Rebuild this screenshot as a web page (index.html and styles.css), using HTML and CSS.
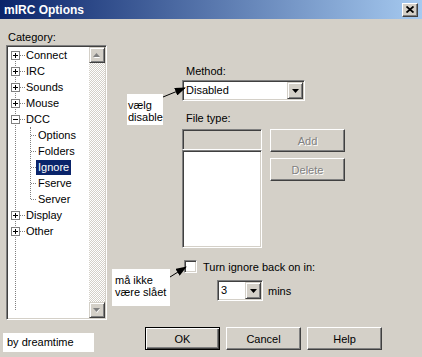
FILE: index.html
```html
<!DOCTYPE html>
<html lang="da">
<head>
    <meta charset="UTF-8">
    <title>mIRC Options</title>
    <link rel="stylesheet" href="styles.css">
</head>
<body>
    <div class="titlebar">
        <span class="title">mIRC Options</span>
        <span class="close">
            <svg width="8" height="7" viewBox="0 0 8 7">
                <path d="M0.5 0.5 L7.5 6.5 M7.5 0.5 L0.5 6.5" stroke="#000" stroke-width="1.8" fill="none"/>
            </svg>
        </span>
    </div>

    <div class="client">
        <div class="left">
            <div class="cat-label">Category:</div>
            <div class="tree">
                <ul class="roots">
                    <li><div class="row"><span class="exp plus"></span><span class="txt">Connect</span></div></li>
                    <li><div class="row"><span class="exp plus"></span><span class="txt">IRC</span></div></li>
                    <li><div class="row"><span class="exp plus"></span><span class="txt">Sounds</span></div></li>
                    <li><div class="row"><span class="exp plus"></span><span class="txt">Mouse</span></div></li>
                    <li>
                        <div class="row"><span class="exp minus"></span><span class="txt">DCC</span></div>
                        <ul class="kids">
                            <li class="row kid"><span class="txt">Options</span></li>
                            <li class="row kid"><span class="txt">Folders</span></li>
                            <li class="row kid"><span class="txt selected">Ignore</span></li>
                            <li class="row kid"><span class="txt">Fserve</span></li>
                            <li class="row kid"><span class="txt">Server</span></li>
                        </ul>
                    </li>
                    <li><div class="row"><span class="exp plus"></span><span class="txt">Display</span></div></li>
                    <li><div class="row"><span class="exp plus"></span><span class="txt">Other</span></div></li>
                </ul>
                <div class="vscroll">
                    <div class="sbtn">
                        <svg width="8" height="5" viewBox="0 0 8 5">
                            <path d="M1 5 L4 1 L7 5 Z" fill="#fff"/>
                            <path d="M0 4 L3.5 0 L7 4 Z" fill="#808080"/>
                        </svg>
                    </div>
                    <div class="track"></div>
                    <div class="sbtn">
                        <svg width="8" height="5" viewBox="0 0 8 5">
                            <path d="M1 1 L4 5 L7 1 Z" fill="#fff"/>
                            <path d="M0 0 L3.5 4 L7 0 Z" fill="#808080"/>
                        </svg>
                    </div>
                </div>
            </div>
            <div class="sig">by dreamtime</div>
        </div>

        <div class="right">
            <div class="opts">
                <div class="lbl">Method:</div>
                <div class="combo wide">
                    <span class="val">Disabled</span>
                    <span class="drop">
                        <svg width="7" height="4" viewBox="0 0 7 4"><path d="M0 0 H7 L3.5 4 Z" fill="#000"/></svg>
                    </span>
                </div>

                <div class="lbl ftype">File type:</div>
                <div class="filebox">
                    <div class="simple">
                        <div class="edit"></div>
                        <div class="list"></div>
                    </div>
                    <div class="btns">
                        <div class="btn off">Add</div>
                        <div class="btn off">Delete</div>
                    </div>
                </div>

                <div class="check-row">
                    <span class="check"></span>
                    <span class="check-text">Turn ignore back on in:</span>
                </div>
                <div class="mins-row">
                    <div class="combo small">
                        <span class="val">3</span>
                        <span class="drop">
                            <svg width="7" height="4" viewBox="0 0 7 4"><path d="M0 0 H7 L3.5 4 Z" fill="#000"/></svg>
                        </span>
                    </div>
                    <span class="unit">mins</span>
                </div>
            </div>

            <div class="actions">
                <div class="btn default">OK</div>
                <div class="btn">Cancel</div>
                <div class="btn">Help</div>
            </div>
        </div>

        <!-- hand-drawn callouts on top of the dialog -->
        <div class="note note-method">vælg<br>disable</div>
        <div class="note note-ignore">må ikke<br>være slået</div>
        <svg class="arrows" width="422" height="338" viewBox="0 0 422 338">
            <defs>
                <marker id="head" markerWidth="11" markerHeight="8" refX="10" refY="4" orient="auto" markerUnits="userSpaceOnUse">
                    <path d="M0 0 L11 4 L0 8 Z" fill="#000"/>
                </marker>
            </defs>
            <line x1="163" y1="78" x2="185" y2="69" stroke="#000" stroke-width="1" marker-end="url(#head)"/>
            <line x1="170" y1="258" x2="186" y2="248" stroke="#000" stroke-width="1" marker-end="url(#head)"/>
        </svg>
    </div>
</body>
</html>
```

FILE: styles.css
```css
body {
    margin: 0;
    width: 422px;
    height: 357px;
    overflow: hidden;
    background-color: #d4d0c8;
    font-family: 'Liberation Sans', Arial, sans-serif;
    font-size: 11px;
    color: #000;
}

/* title bar */

.titlebar {
    height: 19px;
    padding: 0 4px;
    display: flex;
    align-items: center;
    justify-content: space-between;
    background: linear-gradient(to right, #0a246a, #a6caf0);
    color: #fff;
    font-size: 12px;
    font-weight: bold;
}

.close {
    width: 16px;
    height: 14px;
    box-sizing: border-box;
    display: flex;
    align-items: center;
    justify-content: center;
    background-color: #d4d0c8;
    border: 1px solid;
    border-color: #fff #404040 #404040 #fff;
    box-shadow: inset -1px -1px #808080;
}

.client {
    position: relative;
    display: flex;
    height: 338px;
}

/* left column: category tree */

.left {
    margin-left: 6px;
    width: 101px;
}

.cat-label {
    margin-top: 12px;
    margin-bottom: 1px;
    padding-left: 2px;
    height: 13px;
    line-height: 13px;
}

.tree {
    height: 275px;
    box-sizing: border-box;
    padding: 1px;
    display: flex;
    background-color: #fff;
    border: 1px solid;
    border-color: #808080 #fff #fff #808080;
    box-shadow: inset 1px 1px #404040, inset -1px -1px #d4d0c8;
}

.roots,
.kids {
    list-style: none;
    margin: 0;
    padding: 0;
    position: relative;
}

.roots {
    flex: 1;
}

.roots::before {
    content: '';
    position: absolute;
    left: 7px;
    top: 8px;
    bottom: 8px;
    border-left: 1px dotted #808080;
}

.kids::before {
    content: '';
    position: absolute;
    left: 22px;
    top: 0;
    bottom: 8px;
    border-left: 1px dotted #808080;
}

.row {
    position: relative;
    height: 16px;
    padding-left: 3px;
    display: flex;
    align-items: center;
}

.row::before {
    content: '';
    position: absolute;
    left: 8px;
    top: 8px;
    width: 9px;
    border-top: 1px dotted #808080;
}

.row.kid {
    padding-left: 28px;
}

.row.kid::before {
    left: 23px;
    width: 5px;
}

.exp {
    position: relative;
    width: 9px;
    height: 9px;
    box-sizing: border-box;
    border: 1px solid #808080;
    background-color: #fff;
}

.exp::before {
    content: '';
    position: absolute;
    left: 1px;
    top: 3px;
    width: 5px;
    height: 1px;
    background-color: #000;
}

.exp.plus::after {
    content: '';
    position: absolute;
    left: 3px;
    top: 1px;
    width: 1px;
    height: 5px;
    background-color: #000;
}

.txt {
    margin-left: 6px;
    line-height: 15px;
}

.kid .txt {
    margin-left: 0;
    padding: 0 2px;
    position: relative;
}

.txt.selected {
    background-color: #0a246a;
    color: #fff;
}

.vscroll {
    width: 16px;
    display: flex;
    flex-direction: column;
}

.track {
    flex: 1;
    background: repeating-conic-gradient(#d4d0c8 0 25%, #fff 0 50%) 0 0 / 2px 2px;
}

.sbtn {
    height: 16px;
    box-sizing: border-box;
    display: flex;
    align-items: center;
    justify-content: center;
    background-color: #d4d0c8;
    border: 1px solid;
    border-color: #d4d0c8 #404040 #404040 #d4d0c8;
    box-shadow: inset 1px 1px #fff, inset -1px -1px #808080;
}

.sig {
    margin-top: 13px;
    margin-left: -3px;
    width: 91px;
    height: 19px;
    box-sizing: border-box;
    padding-left: 4px;
    line-height: 19px;
    background-color: #fff;
}

/* right side: ignore options */

.right {
    flex: 1;
    display: flex;
    flex-direction: column;
}

.opts {
    padding: 46px 0 0 75px;
}

.lbl {
    height: 13px;
    line-height: 13px;
    padding-left: 4px;
}

.lbl.ftype {
    margin-top: 11px;
}

.combo,
.edit,
.list,
.check {
    box-sizing: border-box;
    border: 1px solid;
    border-color: #808080 #fff #fff #808080;
    box-shadow: inset 1px 1px #404040, inset -1px -1px #d4d0c8;
    background-color: #fff;
}

.combo {
    height: 21px;
    padding: 1px;
    display: flex;
}

.combo.wide {
    margin-top: 2px;
    width: 123px;
}

.combo.small {
    width: 46px;
}

.val {
    flex: 1;
    padding-left: 2px;
    line-height: 17px;
}

.drop {
    width: 16px;
    height: 17px;
    box-sizing: border-box;
    display: flex;
    align-items: center;
    justify-content: center;
    background-color: #d4d0c8;
    border: 1px solid;
    border-color: #d4d0c8 #404040 #404040 #d4d0c8;
    box-shadow: inset 1px 1px #fff, inset -1px -1px #808080;
}

.filebox {
    margin-top: 4px;
    display: flex;
    gap: 8px;
}

.simple {
    width: 80px;
    display: flex;
    flex-direction: column;
}

.edit {
    height: 21px;
    background-color: #d4d0c8;
}

.list {
    height: 98px;
}

.btns {
    display: flex;
    flex-direction: column;
    gap: 6px;
}

.btn {
    width: 75px;
    height: 23px;
    box-sizing: border-box;
    display: flex;
    align-items: center;
    justify-content: center;
    background-color: #d4d0c8;
    border: 1px solid;
    border-color: #fff #404040 #404040 #fff;
    box-shadow: inset -1px -1px #808080;
}

.btn.off {
    color: #808080;
    text-shadow: 1px 1px #fff;
}

.btn.default {
    border-color: #000;
    box-shadow: inset 1px 1px #fff, inset -1px -1px #404040, inset -2px -2px #808080;
}

.check-row {
    margin-top: 12px;
    height: 13px;
    display: flex;
    align-items: center;
}

.check {
    margin-left: 2px;
    width: 13px;
    height: 13px;
}

.check-text {
    margin-left: 6px;
}

.mins-row {
    margin-top: 7px;
    padding-left: 35px;
    display: flex;
    align-items: center;
}

.unit {
    margin-left: 5px;
}

.actions {
    margin-top: 26px;
    padding-left: 38px;
    display: flex;
    gap: 6px;
}

/* callouts */

.note {
    position: absolute;
    box-sizing: border-box;
    background-color: #fff;
    line-height: 12px;
}

.note-method {
    left: 127px;
    top: 75px;
    width: 36px;
    height: 31px;
    padding: 5px 0 0 1px;
}

.note-ignore {
    left: 112px;
    top: 250px;
    width: 58px;
    height: 37px;
    padding: 5px 0 0 3px;
}

.arrows {
    position: absolute;
    left: 0;
    top: 0;
    pointer-events: none;
}
```
